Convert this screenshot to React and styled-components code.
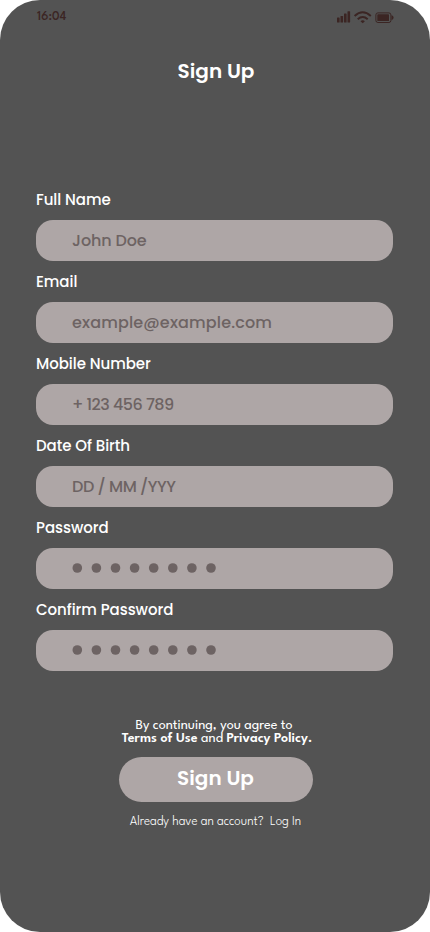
import React from "react";
import styled, { createGlobalStyle } from "styled-components";

const GlobalStyle = createGlobalStyle`
  * { box-sizing: border-box; }
  body { margin: 0; background: #fff; }
`;

const Screen = styled.main`
  width: 430px;
  height: 932px;
  border-radius: 40px;
  background: #535353;
  color: #fff;
  overflow: hidden;
  display: flex;
  flex-direction: column;
  font-family: Poppins, Inter, sans-serif;
`;

const StatusBar = styled.header`
  height: 34px;
  padding: 0 36px 0 37px;
  display: flex;
  align-items: center;
  justify-content: space-between;
  color: #3b2523;
`;

const Time = styled.span`
  font: 500 13px/16px "League Spartan", Lato, sans-serif;
  letter-spacing: 0.1px;
`;

const StatusIcons = styled.svg`
  display: block;
  width: 57px;
  height: 14px;
`;

const Title = styled.h1`
  margin: 22px 0 0 2px;
  height: 30px;
  text-align: center;
  font-size: 20px;
  line-height: 30px;
  font-weight: 600;
`;

const Form = styled.form`
  margin: 102px 37px 0 36px;
  display: flex;
  flex-direction: column;
`;

const Field = styled.div`
  height: 82px;
  display: flex;
  flex-direction: column;
`;

const Label = styled.label`
  height: 32px;
  line-height: 24px;
  font-size: 15px;
  font-weight: 500;
  white-space: nowrap;
  letter-spacing: -0.05px;
`;

const Input = styled.div`
  height: 41px;
  border-radius: 17px;
  padding: 1px 0 0 36px;
  background: #aea6a6;
  color: #6d6363;
  display: flex;
  align-items: center;
  font-size: 16px;
  line-height: 24px;
  font-weight: 500;
  white-space: pre;
  letter-spacing: ${(p) => p.$tracking || 0}px;
`;

const Dots = styled.svg`
  display: block;
  width: 146px;
  height: 12px;
`;

const Footer = styled.footer`
  margin-top: 39px;
  display: flex;
  flex-direction: column;
  align-items: center;
  font-family: "League Spartan", Lato, sans-serif;
`;

const Terms = styled.p`
  margin: 0 0 0 4px;
  height: 37.5px;
  font-size: 14px;
  line-height: 13px;
  font-weight: 400;
  text-align: center;
  white-space: nowrap;
`;

const TermsLine = styled.span`
  display: block;
  margin-left: ${(p) => p.$shift || 0}px;
`;

const Strong = styled.strong`
  font-weight: 600;
`;

const SubmitButton = styled.button`
  width: 194px;
  height: 45px;
  margin-left: 1px;
  border: 0;
  border-radius: 23px;
  padding: 0 0 2px;
  background: #aea6a6;
  color: #fff;
  font: 600 20px/30px Poppins, Inter, sans-serif;
`;

const LoginPrompt = styled.p`
  margin: 12px 0 0 1px;
  font-size: 13px;
  line-height: 16px;
  font-weight: 300;
  white-space: pre;
`;

const fields = [
  { label: "Full Name", value: "John Doe", tracking: -0.12 },
  { label: "Email", value: "example@example.com", tracking: 0.15 },
  { label: "Mobile Number", value: "+ 123 456 789", tracking: -0.52 },
  { label: "Date Of Birth", value: "DD / MM /YYY", tracking: -0.45 },
  { label: "Password", masked: true },
  { label: "Confirm Password", masked: true },
];

const MaskedValue = () => (
  <Dots viewBox="0 0 146 12" fill="currentColor">
    {Array.from({ length: 8 }, (_, i) => (
      <circle key={i} cx={5.3 + i * 19.1} cy="5" r="4.8" />
    ))}
  </Dots>
);

export default function App() {
  return (
    <>
      <GlobalStyle />
      <Screen>
        <StatusBar>
          <Time>16:04</Time>
          <StatusIcons viewBox="0 0 57 14" fill="currentColor">
            <rect x="0" y="7.5" width="2.6" height="5" rx=".6" />
            <rect x="3.5" y="6" width="2.6" height="6.5" rx=".6" />
            <rect x="7" y="3.5" width="2.6" height="9" rx=".6" />
            <rect x="10.5" y="1.2" width="2.6" height="11.3" rx=".6" />
            <g fill="none" stroke="currentColor" strokeWidth="2">
              <path d="M17.6 6Q25.7 -1.4 33.8 6" />
              <path d="M20.7 9.2Q25.7 4.8 30.7 9.2" />
            </g>
            <path d="M23.5 11.2Q25.7 9.4 27.9 11.2L25.7 13.2Z" />
            <rect x="38.9" y="2.9" width="15" height="9.6" rx="2" fill="none" stroke="currentColor" />
            <rect x="40.3" y="4.3" width="11.7" height="6.8" rx=".7" />
            <path d="M54.5 5.3Q56.6 5.7 56.6 7.7T54.5 10.1Z" />
          </StatusIcons>
        </StatusBar>
        <Title>Sign Up</Title>
        <Form>
          {fields.map((f) => (
            <Field key={f.label}>
              <Label>{f.label}</Label>
              <Input $tracking={f.tracking}>{f.masked ? <MaskedValue /> : f.value}</Input>
            </Field>
          ))}
        </Form>
        <Footer>
          <Terms>
            <TermsLine $shift={-6}>By continuing, you agree to</TermsLine>
            <TermsLine>
              <Strong>Terms of Use</Strong> and <Strong>Privacy Policy.</Strong>
            </TermsLine>
          </Terms>
          <SubmitButton type="button">Sign Up</SubmitButton>
          <LoginPrompt>{"Already have an account?  Log In"}</LoginPrompt>
        </Footer>
      </Screen>
    </>
  );
}
